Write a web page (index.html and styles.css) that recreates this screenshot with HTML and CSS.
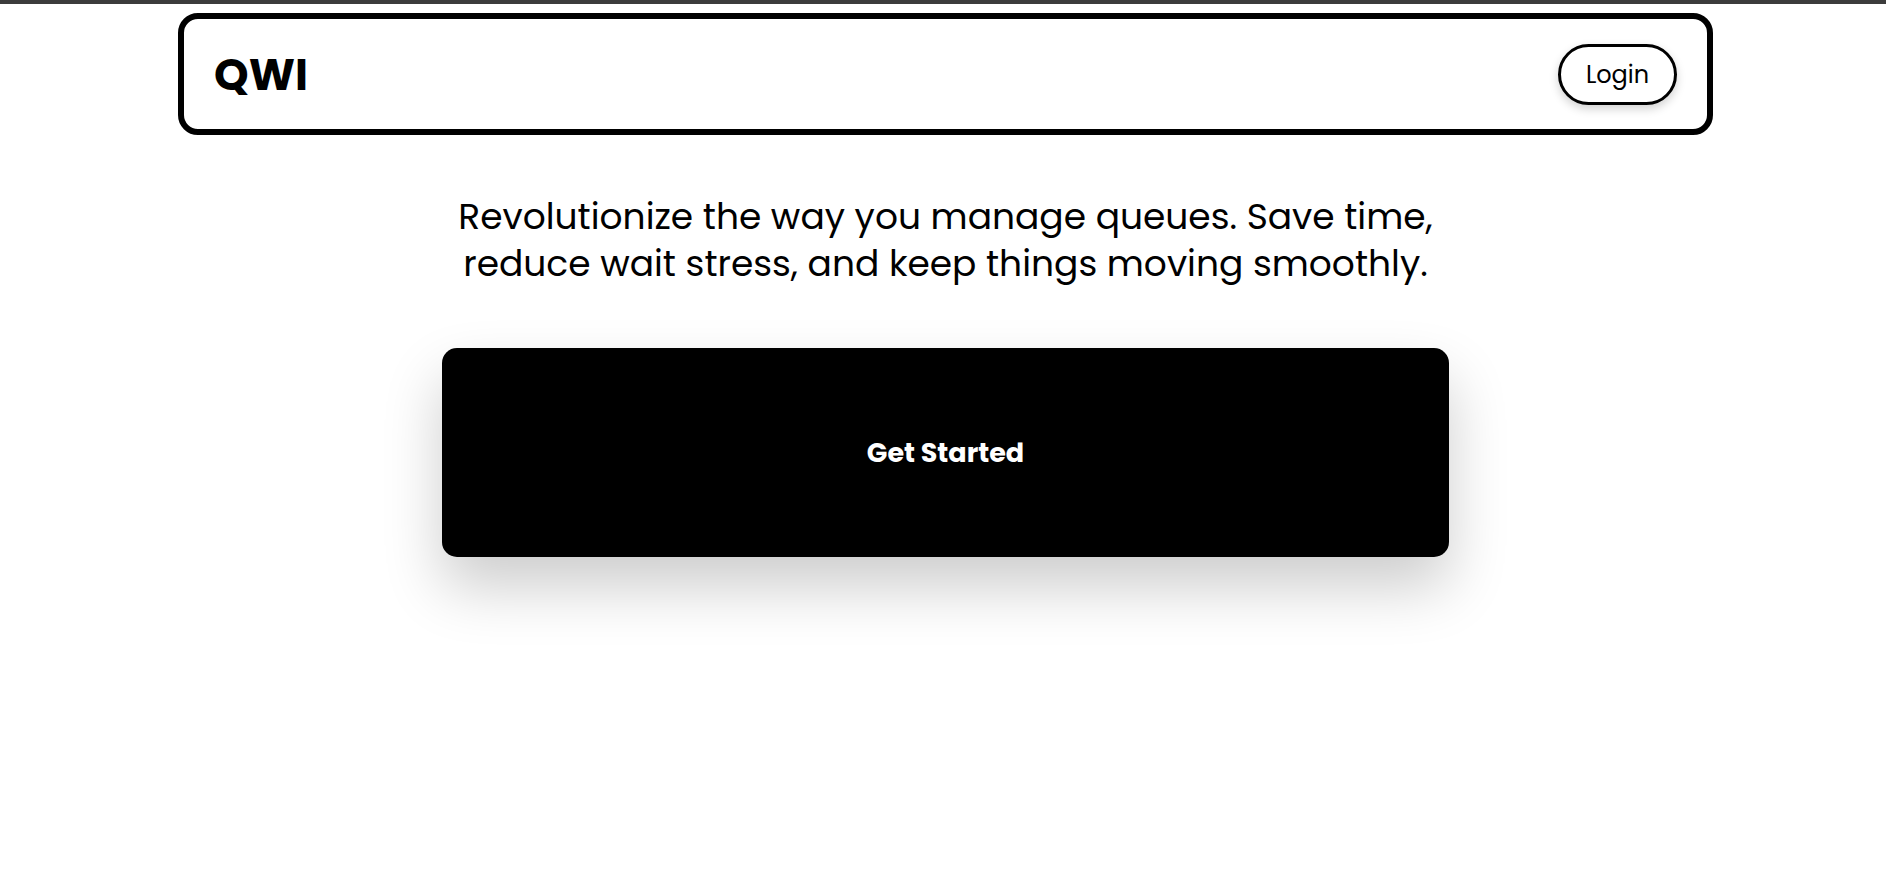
FILE: index.html
```html
<!DOCTYPE html>
<html lang="en">
<head>
<meta charset="utf-8">
<title>QWI</title>
<link rel="stylesheet" href="styles.css">
</head>
<body>
<div class="chrome-bar"></div>
<div class="page">
  <header class="navbar">
    <div class="brand">QWI</div>
    <button class="login-btn">Login</button>
  </header>
  <main class="hero">
    <p class="tagline">Revolutionize the way you manage queues. Save time,<br>reduce wait stress, and keep things moving smoothly.</p>
    <button class="cta">Get Started</button>
  </main>
</div>
</body>
</html>
```

FILE: styles.css
```css
* {
  box-sizing: border-box;
}

html, body {
  margin: 0;
  padding: 0;
  background: #ffffff;
}

body {
  font-family: "Poppins", "Inter", "Liberation Sans", sans-serif;
  color: #000;
  min-height: 100vh;
}

.chrome-bar {
  height: 4px;
  background: #3c3c3c;
}

.page {
  display: flex;
  flex-direction: column;
  align-items: center;
  padding-left: 5px;
  min-height: calc(100vh - 4px);
}

.navbar {
  margin-top: 9px;
  width: 1535px;
  height: 122px;
  border: 6px solid #000;
  border-radius: 20px;
  padding: 0 30px 0 30px;
  display: flex;
  align-items: center;
  justify-content: space-between;
}

.brand {
  font-size: 44px;
  font-weight: 700;
}

.login-btn {
  width: 119px;
  height: 61px;
  border: 3.5px solid #000;
  border-radius: 31px;
  background: #fff;
  font-family: inherit;
  font-size: 24px;
  font-weight: 400;
  color: #000;
  box-shadow: 0 4px 10px rgba(0, 0, 0, 0.18);
  cursor: pointer;
}

.hero {
  display: flex;
  flex-direction: column;
  align-items: center;
}

.tagline {
  margin: 58px 0 0;
  font-size: 36px;
  line-height: 47px;
  text-align: center;
}

.cta {
  margin-top: 61px;
  width: 1007px;
  height: 209px;
  border: none;
  border-radius: 15px;
  background: #000;
  color: #fff;
  font-family: inherit;
  font-size: 27px;
  font-weight: 700;
  box-shadow: 0 30px 60px rgba(0, 0, 0, 0.2);
  cursor: pointer;
}
```
